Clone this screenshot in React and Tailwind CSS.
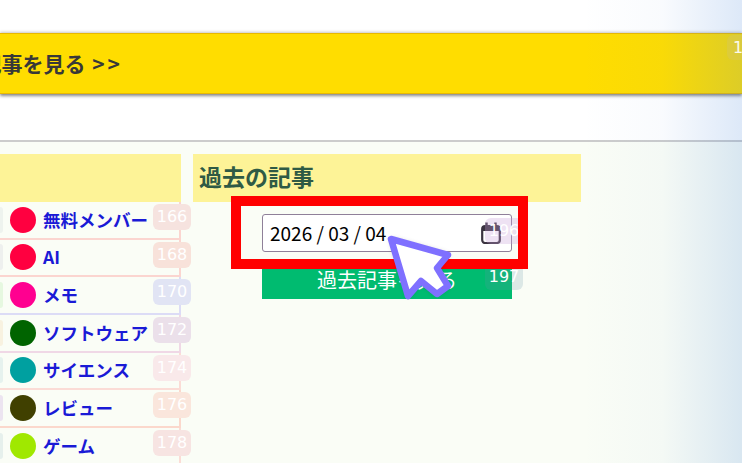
import React from 'react';

const CJK = "font-['Noto_Sans_CJK_JP','Liberation_Sans',sans-serif]";
const NUM = "font-['DejaVu_Sans',sans-serif]";

// 左カラムのカテゴリ一覧
const categories = [
  { name: '無料メンバー', color: 'bg-[#ff0040]', num: 166, badge: 'bg-[#f6e3df]', line: 'border-[#fbd5d0]', side: 'bg-[#eef3ee]' },
  { name: 'AI', color: 'bg-[#ff0040]', num: 168, badge: 'bg-[#f8e2da]', line: 'border-[#fbd5d0]', side: 'bg-[#eef0ee]' },
  { name: 'メモ', color: 'bg-[#ff0090]', num: 170, badge: 'bg-[#e1e4f4]', line: 'border-[#dcdcf6]', side: 'bg-[#e6f8e0]' },
  { name: 'ソフトウェア', color: 'bg-[#006400]', num: 172, badge: 'bg-[#ebe0ea]', line: 'border-[#f0d8e6]', side: 'bg-[#f8f2e0]' },
  { name: 'サイエンス', color: 'bg-[#00a0a0]', num: 174, badge: 'bg-[#f9e9ea]', line: 'border-[#fbdcd6]', side: 'bg-[#e6f2ee]' },
  { name: 'レビュー', color: 'bg-[#404000]', num: 176, badge: 'bg-[#fae6dc]', line: 'border-[#fbd8cc]', side: 'bg-[#ece4f0]' },
  { name: 'ゲーム', color: 'bg-[#a0e800]', num: 178, badge: 'bg-[#f7e4e2]', line: 'border-[#fbdcd6]', side: 'bg-[#e6f0ec]' },
];

function CategoryRow({ item }) {
  return (
    <div className={`relative flex h-[37.67px] w-[181px] shrink-0 items-center border-b-2 border-r-2 ${item.line}`}>
      <div className={`h-[26px] w-[3px] shrink-0 rounded-r ${item.side}`} />
      <div className={`ml-[6.5px] h-[26px] w-[26px] shrink-0 rounded-full ${item.color}`} />
      <span className="ml-[7.5px] whitespace-nowrap text-[17.5px] font-bold text-[#1a1ad6]">
        {item.name}
      </span>
      <span className={`absolute left-[153px] top-[2px] flex h-[26px] w-[38px] items-center justify-center rounded-md text-[16px] text-white ${NUM}`}>
        <span className={`absolute inset-0 rounded-md ${item.badge}`} />
        <span className="relative">{item.num}</span>
      </span>
    </div>
  );
}

function CalendarIcon() {
  return (
    <svg width="20" height="22" viewBox="0 0 20 22" fill="none" stroke="#3a3340" strokeWidth="2.2">
      <rect x="1.2" y="4" width="17.6" height="17" rx="3" />
      <path d="M1.2 9 H18.8 V7 a3 3 0 0 0 -3 -3 H4.2 a3 3 0 0 0 -3 3 Z" fill="#3a3340" stroke="none" />
      <path d="M5.5 0.5 V5 M14.5 0.5 V5" strokeWidth="2.4" />
    </svg>
  );
}

export default function App() {
  return (
    <div className={`relative h-[463px] w-[742px] overflow-hidden bg-white ${CJK}`}>
      {/* banner */}
      <div className="pt-[33px]">
        <div className="flex h-[61px] w-full items-center justify-start border-y border-[#e8b800] bg-[#ffdd00] shadow-[0_2px_3px_rgba(0,0,0,0.45),0_-1px_3px_rgba(0,0,0,0.2)]">
          <div className="flex w-[120px] shrink-0 justify-end overflow-hidden whitespace-nowrap text-[21px] font-bold text-[#383838]">
            <span className="shrink-0">過去の記事を見る <span className="ml-[2px] mr-[-3px] tracking-[3px]">&gt;&gt;</span></span>
          </div>
        </div>
      </div>

      {/* content */}
      <div className="mt-[46px] flex h-[323px] gap-3 border-t-2 border-[#cccccc] bg-[#fafdf6] pt-3">
        <div className="flex w-[181px] shrink-0 flex-col">
          <div className="h-[48px] shrink-0 bg-[#fdf397]" />
          {categories.map((item) => (
            <CategoryRow key={item.num} item={item} />
          ))}
        </div>

        <div className="w-[388px] shrink-0">
          <div className="flex h-[48px] items-center bg-[#fdf397] px-[6px] pb-1 text-[23px] font-bold text-[#2f5a45]">
            過去の記事
          </div>
          <div className="ml-[69px] mt-3 w-[250px]">
            <div className="flex h-[38px] items-center justify-between rounded-[3px] border border-[#8f8099] bg-white pl-[7px] pr-[10px] text-[19px] text-black">
              <span>2026 / 03 / 04</span>
              <CalendarIcon />
            </div>
            <div className="mt-2 flex h-[39px] items-center justify-center bg-[#00bb70] text-[20px] text-white">
              過去記事を見る
            </div>
          </div>
        </div>
      </div>

      {/* 右端のグラデーション */}
      <div className="pointer-events-none absolute inset-y-0 right-0 w-[160px] bg-[linear-gradient(to_right,rgba(65,130,217,0),rgba(65,130,217,0.03)_50%,rgba(65,130,217,0.18))]" />

      {/* counters */}
      <div className={`absolute left-[727px] top-[35px] flex h-[25px] w-[38px] items-center rounded-md bg-[#d8c860]/40 pl-[6px] text-[16px] text-white/90 ${NUM}`}>
        1
      </div>
      <div className={`absolute left-[485px] top-[218px] flex h-[26px] w-[38px] items-center justify-center rounded-md bg-[#c8a0d8]/30 text-[16px] text-white ${NUM}`}>
        196
      </div>
      <div className={`absolute left-[485px] top-[264px] flex h-[26px] w-[38px] items-center justify-center rounded-md bg-[#6496aa]/20 text-[16px] text-white ${NUM}`}>
        197
      </div>

      {/* annotation */}
      <div className="pointer-events-none absolute left-[231px] top-[196px] h-[73px] w-[297px] border-[10px] border-[#ff0000]" />
      <svg className="pointer-events-none absolute left-[375px] top-[225px]" width="90" height="85" viewBox="0 0 90 85">
        <defs>
          <filter id="cursor-shadow" x="-30%" y="-30%" width="160%" height="160%">
            <feGaussianBlur stdDeviation="3" />
          </filter>
        </defs>
        <path d="M16 14 L73 30 L62 43 L73 61 L62 69 L46 56 L33 71 Z" fill="#000" opacity="0.3" filter="url(#cursor-shadow)" />
        <path d="M16 14 L73 30 L62 43 L73 61 L62 69 L46 56 L33 71 Z" fill="#fff" stroke="#7f70ff" strokeWidth="6.5" strokeLinejoin="round" />
      </svg>
    </div>
  );
}
